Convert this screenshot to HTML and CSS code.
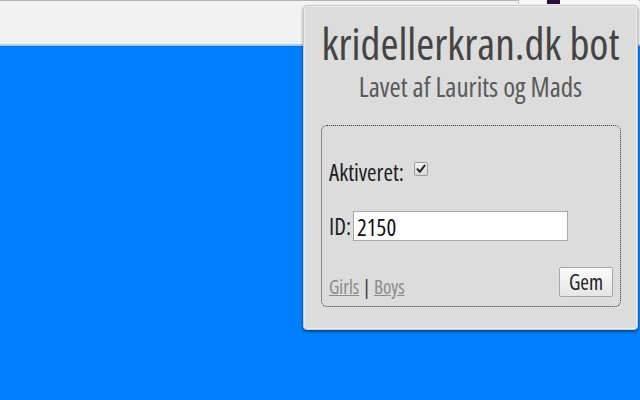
FILE: index.html
```html
<!DOCTYPE html>
<html>
<head>
<meta charset="utf-8">
<link rel="stylesheet" href="styles.css">
</head>
<body>
<div class="screen">
  <div class="toolbar">
    <div class="tb-btn"></div>
    <div class="tb-icon"></div>
  </div>
  <div class="page"></div>
  <div class="popup">
    <h1 class="title">kridellerkran.dk bot</h1>
    <p class="subtitle">Lavet af Laurits og Mads</p>
    <div class="box">
      <div class="row row-active">
        <span class="label">Aktiveret:</span>
        <span class="check"><svg width="10" height="10" viewBox="0 0 10 10"><path d="M1.5 5.2 L3.8 7.8 L8.6 1.6" fill="none" stroke="#222" stroke-width="2" stroke-linecap="round" stroke-linejoin="round"/></svg></span>
      </div>
      <div class="row row-id">
        <span class="label">ID:</span>
        <span class="input">2150</span>
      </div>
      <div class="row row-foot">
        <span class="links"><a class="link">Girls</a> | <a class="link">Boys</a></span>
        <span class="btn">Gem</span>
      </div>
    </div>
  </div>
</div>
</body>
</html>
```

FILE: styles.css
```css
html, body {
  margin: 0;
  padding: 0;
}
body {
  width: 640px;
  height: 400px;
  overflow: hidden;
  background: #0080ff;
  font-family: "Open Sans", "DejaVu Sans Condensed", sans-serif;
  font-stretch: 75%;
}
.screen {
  position: relative;
  width: 640px;
  height: 400px;
  display: flex;
  flex-direction: column;
}
.toolbar {
  position: relative;
  height: 43px;
  background: #f2f2f2;
  border-top: 1px solid #b4b4b4;
  border-bottom: 2px solid #9fd0f6;
}
.tb-btn {
  position: absolute;
  left: 518px;
  top: -1px;
  width: 120px;
  height: 4px;
  border-left: 1px solid #bdbdbd;
  background: #f7f7f7;
}
.tb-icon {
  position: absolute;
  left: 547px;
  top: -1px;
  width: 13px;
  height: 4px;
  background: #2a0f3c;
}
.page {
  flex: 1;
  background: #0080ff;
  border-top: 1px solid #0a6fd8;
}
.popup {
  position: absolute;
  left: 303px;
  top: 5px;
  width: 335px;
  height: 325px;
  background: #dcdcdc;
  border: 1px solid #c9c9c9;
  border-radius: 4px;
  box-shadow: inset 0 0 0 1px #ececec, 0 2px 3px rgba(0, 0, 0, 0.45);
  display: flex;
  flex-direction: column;
  align-items: center;
  padding-top: 14px;
  box-sizing: border-box;
}
.title {
  margin: 0;
  font-weight: normal;
  font-size: 43.5px;
  line-height: 48px;
  color: #444;
  white-space: nowrap;
}
.subtitle {
  margin: 4px 0 0;
  font-size: 27px;
  line-height: 30px;
  color: #5a5a5a;
  white-space: nowrap;
}
.box {
  margin-top: 23px;
  align-self: stretch;
  margin-left: 17px;
  margin-right: 16px;
  height: 182px;
  box-sizing: border-box;
  border: 1px dotted #333;
  border-radius: 6px;
  padding: 34px 7px 0 7px;
  display: flex;
  flex-direction: column;
}
.row {
  display: flex;
  align-items: center;
  font-size: 23px;
  line-height: 24px;
  color: #1e1e1e;
}
.row-active {
  height: 24px;
}
.check {
  margin-left: 10px;
  width: 12px;
  height: 12px;
  border: 1px solid #9a9a9a;
  border-radius: 2px;
  background: linear-gradient(#f4f4f4, #d9d9d9);
  display: flex;
  align-items: center;
  justify-content: center;
  margin-top: -6px;
}
.row-id {
  margin-top: 27px;
  height: 30px;
}
.input {
  margin-left: 2px;
  width: 215px;
  height: 30px;
  box-sizing: border-box;
  background: #fff;
  border: 1px solid #a9a9a9;
  padding: 1px 3px 0;
  line-height: 28px;
  color: #111;
}
.row-foot {
  margin-top: 26px;
  height: 30px;
  justify-content: space-between;
  align-items: flex-end;
}
.links {
  font-size: 19px;
  line-height: 20px;
  color: #333;
}
.link {
  color: #8a8a8a;
  text-decoration: underline;
}
.btn {
  width: 54px;
  height: 30px;
  box-sizing: border-box;
  border: 1px solid #a6a6a6;
  border-radius: 2px;
  background: linear-gradient(#fbfbfb, #e6e6e6);
  font-size: 21px;
  line-height: 28px;
  text-align: center;
  color: #1e1e1e;
}
```
